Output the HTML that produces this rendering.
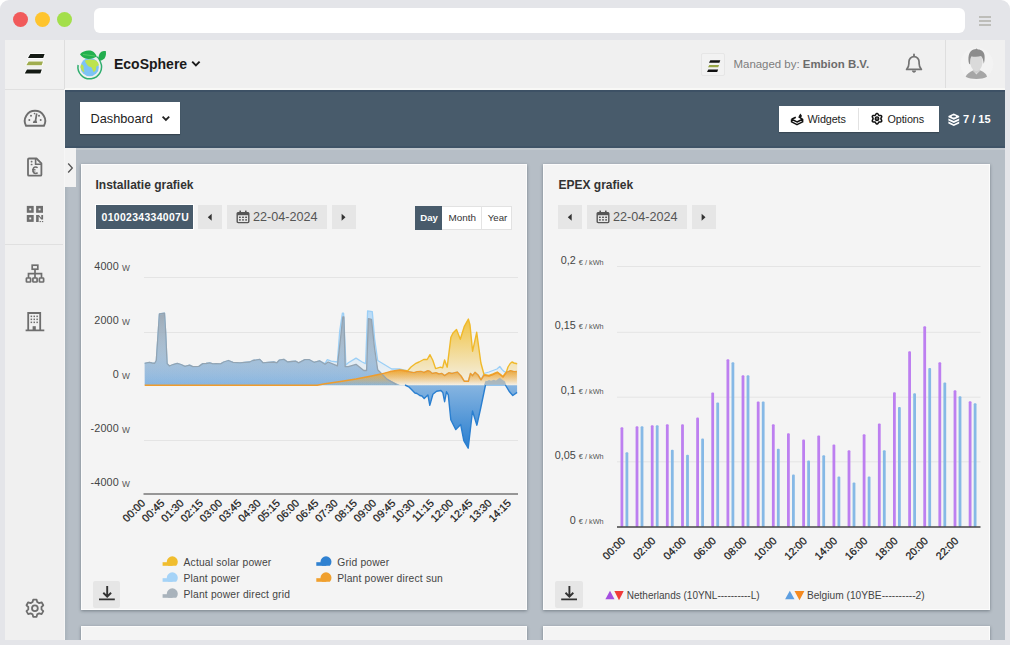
<!DOCTYPE html>
<html><head><meta charset="utf-8">
<style>
*{box-sizing:border-box;margin:0;padding:0}
html,body{width:1010px;height:645px;overflow:hidden;background:#fff;font-family:"Liberation Sans",sans-serif}
.a{position:absolute}
#frame{left:0;top:0;width:1010px;height:645px;background:#e4e5e9;border-radius:9px 9px 0 0}
.dot{width:15px;height:15px;border-radius:50%;top:12px}
#addr{left:94px;top:8px;width:871px;height:25px;background:#fff;border-radius:6px}
.hb{left:979px;width:12px;height:2px;background:#bdbdb9}
#side{left:5px;top:40px;width:60px;height:600px;background:#f0f0f0;border-right:1px solid #f6f6f6}
#hdr{left:65px;top:40px;width:940px;height:48px;background:#f0f0f0}
#hdrline{left:65px;top:88px;width:940px;height:2px;background:#f8f8f6}
#bar{left:65px;top:90px;width:940px;height:58px;background:#485b6b;border-top:2px solid #3d5165;border-bottom:2px solid #405467}
#content{left:65px;top:148px;width:940px;height:492px;background:#b6bec6}
.card{background:#f4f4f4;border:1px solid #fcfcfc;box-shadow:0 1px 3px rgba(40,50,60,.45)}
.txt{white-space:nowrap;line-height:1}
</style></head><body>
<div id="frame" class="a"></div>
<div class="a dot" style="left:13px;background:#f15a5b"></div>
<div class="a dot" style="left:35px;background:#fec42e"></div>
<div class="a dot" style="left:57px;background:#a3df4b"></div>
<div id="addr" class="a"></div>
<div class="a hb" style="top:16px"></div>
<div class="a hb" style="top:20px"></div>
<div class="a hb" style="top:24px"></div>

<div id="side" class="a"></div>
<div class="a" style="left:5px;top:89px;width:59px;height:1px;background:#e0e0e0"></div>
<div class="a" style="left:5px;top:244px;width:58px;height:1px;background:#e0e0e0"></div>
<div id="hdr" class="a"></div>
<div id="hdrline" class="a"></div>
<div id="bar" class="a"></div>
<div id="content" class="a"></div>
<div class="a" style="left:65px;top:148px;width:940px;height:2px;background:#c2c8ce"></div>
<div class="a" style="left:65px;top:148px;width:4px;height:492px;background:linear-gradient(90deg,#a9b3bb,#b6bec6)"></div>
<div class="a" style="left:64px;top:40px;width:1px;height:49px;background:#dedede"></div>
<div class="a" style="left:65px;top:148px;width:11px;height:39px;background:#f2f2f2"></div>


<!-- sidebar logo -->
<svg class="a" style="left:0;top:0" width="70" height="90" viewBox="0 0 70 90">
 <g stroke="#fff" stroke-width="1.6" stroke-linejoin="round" style="paint-order:stroke">
  <path d="M30.3 54 L44.6 54 L43.2 58 L28 58 Z" fill="#141a14"/>
  <path d="M28.6 61.5 L43 61.5 L41.7 65.3 L26.3 65.3 Z" fill="#a0ad50"/>
  <path d="M27 69.6 L41.8 69.6 L40.4 73.4 L24.7 73.4 Z" fill="#141a14"/>
 </g>
</svg>
<!-- globe logo -->
<svg class="a" style="left:74px;top:46px" width="36" height="36" viewBox="0 0 36 36">
 <circle cx="15.7" cy="21" r="9.2" fill="#7ec3f5"/>
 <path d="M11 14.5 C14 13.5 18 13 22 14.5 C24 16 25 18 24.8 19.5 C23 19.8 22 20.5 22 22 C22.5 24 21 25.5 19.5 26 C18.5 24 18.5 22 17 21 C15 21 13.5 20 13 18.5 C12 17 11 16 11 14.5 Z" fill="#bde34e"/>
 <path d="M7 18.5 C8.5 18 9.5 19.5 9.8 21 C9 22.5 10 24 10.5 26.5 C8.5 25.5 6.8 23 6.5 21 Z" fill="#bde34e"/>
 <path d="M4.1 19 A11.8 11.8 0 1 0 26.4 16" fill="none" stroke="#2fae6e" stroke-width="1.5"/>
 <path d="M26.4 16.2 C26 13.5 24.8 11.8 22.5 10.5" fill="none" stroke="#2fae6e" stroke-width="1.3"/>
 <path d="M6 8.3 C9 4.8 14 3.8 18 5 C20.5 6 22 8.5 22.8 10.5 C19.5 12.5 15 13.5 11.5 12.5 C9 11.8 7 10 6 8.3 Z" fill="#23b04f"/>
 <path d="M9 8.5 L21 10" stroke="#5fcf6a" stroke-width="0.8" fill="none"/>
 <path d="M25 14.5 C24 11.5 24.5 8 27 6 C28.5 5 30.5 4.8 31.8 5 C32.2 7.5 32 10.5 30.5 12.5 C29 14 27 14.8 25 14.5 Z" fill="#22ad4e"/>
</svg>
<div class="a txt" style="left:114px;top:57px;font-size:14px;font-weight:bold;color:#1a1a1a">EcoSphere</div>
<svg class="a" style="left:190px;top:59px" width="12" height="10" viewBox="0 0 12 10"><path d="M2.2 2.6 L5.9 6.4 L9.6 2.6" fill="none" stroke="#1a1a1a" stroke-width="1.9"/></svg>

<!-- managed by -->
<div class="a" style="left:701px;top:52.5px;width:24px;height:23px;background:#f2f2f2;border:1px solid #e6e6e6;border-radius:2px"></div>
<svg class="a" style="left:701px;top:52px" width="24" height="24" viewBox="0 0 24 24">
  <path d="M9.3 8.3 L19.3 8.3 L18.4 10.8 L8 10.8 Z" fill="#111"/>
  <path d="M8.3 13 L18.1 13 L17.2 15.3 L7 15.3 Z" fill="#97a545"/>
  <path d="M7.3 17.5 L17.1 17.5 L16.2 19.9 L6 19.9 Z" fill="#111"/>
</svg>
<div class="a txt" style="left:733.5px;top:59px;font-size:11.45px;color:#7d7d7d">Managed by: <b style="color:#6b6b6b">Embion B.V.</b></div>
<!-- bell -->
<svg class="a" style="left:902px;top:51px" width="24" height="24" viewBox="0 0 24 24">
 <path d="M12 3.4 L12 5.2" stroke="#737373" stroke-width="1.8" stroke-linecap="round"/>
 <path d="M4.6 18.4 C6.4 16.8 6.9 15 6.9 12.6 L6.9 10.9 C6.9 7.9 9.2 5.6 12 5.6 C14.8 5.6 17.1 7.9 17.1 10.9 L17.1 12.6 C17.1 15 17.6 16.8 19.4 18.4 Z" fill="none" stroke="#737373" stroke-width="1.7" stroke-linejoin="round"/>
 <path d="M9.9 19.6 L14.1 19.6 C14 20.9 13.1 21.7 12 21.7 C10.9 21.7 10 20.9 9.9 19.6 Z" fill="#737373"/>
</svg>
<div class="a" style="left:945px;top:40px;width:1px;height:48px;background:#dedede"></div>
<!-- avatar -->
<svg class="a" style="left:958px;top:46px" width="36" height="36" viewBox="0 0 36 36">
 <circle cx="18.8" cy="18.1" r="16.3" fill="#f3f3f3"/>
 <path d="M7.6 30.8 C8.8 27.8 11.5 26.4 15 24.6 L22.6 24.6 C26 26.4 28.6 27.8 29 30.8 C26.5 32.3 22.5 33 18.3 33 C14.2 33 10.2 32.3 7.6 30.8 Z" fill="#a6a6a6"/>
 <path d="M15.3 24.8 L18.4 28.6 L21.7 24.8 Z" fill="#e6e6e6"/>
 <path d="M15.2 20.5 L15.2 25.2 L18.4 27.6 L21.7 25.2 L21.7 20.5 Z" fill="#cfcfcf"/>
 <path d="M12.3 15.5 C12.3 10.5 14.5 8 18.4 8 C22.3 8 24.5 10.5 24.5 15.5 C24.5 21 21.8 25 18.4 25 C15 25 12.3 21 12.3 15.5 Z" fill="#dadada"/>
 <path d="M11 17.5 C9.8 12 10.5 6.8 14 4.3 C15.2 3.5 16.3 3.2 17.3 3.3 L18.6 2.4 L19.9 3.5 C23.5 3.5 26.6 6 26.6 10.2 C26.7 13 26.5 15.5 25.8 17.8 C25.3 14.5 24.8 11.5 23 10 C20 11 15.5 10.6 13.3 10.4 C12.4 12.5 12 14.5 12.2 18.5 Z" fill="#8c8c8c"/>
</svg>


<!-- toolbar -->
<div class="a" style="left:80px;top:102px;width:100px;height:32px;background:#fff;box-shadow:0 1px 1px rgba(0,0,0,.25)"></div>
<div class="a txt" style="left:90.5px;top:112.6px;font-size:12.75px;color:#222">Dashboard</div>
<svg class="a" style="left:160px;top:113px" width="12" height="10" viewBox="0 0 12 10"><path d="M2.6 3.6 L5.9 6.9 L9.2 3.6" fill="none" stroke="#222" stroke-width="1.8"/></svg>

<div class="a" style="left:779px;top:106px;width:160px;height:26px;background:#fff;box-shadow:0 1px 1px rgba(0,0,0,.2)"></div>
<div class="a" style="left:857.5px;top:108px;width:1px;height:22px;background:#e2e2e2"></div>
<svg class="a" style="left:790px;top:111px" width="16" height="16" viewBox="0 0 16 16">
 <path d="M1.6 8.3 L5.8 6.2 M8.6 5.6 L12.6 8.3 L7 10.9 L1.6 8.3 M1.6 8.3 L1.6 10.9 L7 13.6 L12.6 10.9 L12.6 8.3" fill="none" stroke="#111" stroke-width="1.6" stroke-linejoin="round"/>
 <path d="M10.4 2.6 L12 4.9 L10.4 7.2 L8.8 4.9 Z" fill="#111"/>
</svg>
<div class="a txt" style="left:807.5px;top:114px;font-size:10.8px;color:#1c1c1c;letter-spacing:-0.1px">Widgets</div>
<svg class="a" style="left:870px;top:112px" width="14" height="14" viewBox="0 0 14 14">
 <path d="M7.00 1.35 L7.67 1.61 L8.19 2.26 L8.56 2.94 L8.92 3.37 L9.48 3.47 L10.25 3.45 L11.07 3.58 L11.63 4.03 L11.74 4.74 L11.44 5.51 L11.03 6.17 L10.85 6.70 L11.03 7.23 L11.44 7.89 L11.74 8.66 L11.63 9.38 L11.07 9.82 L10.25 9.95 L9.48 9.93 L8.92 10.03 L8.56 10.46 L8.19 11.14 L7.67 11.79 L7.00 12.05 L6.33 11.79 L5.81 11.14 L5.44 10.46 L5.08 10.03 L4.52 9.93 L3.75 9.95 L2.93 9.82 L2.37 9.38 L2.26 8.66 L2.56 7.89 L2.97 7.23 L3.15 6.70 L2.97 6.17 L2.56 5.51 L2.26 4.74 L2.37 4.03 L2.93 3.58 L3.75 3.45 L4.52 3.47 L5.07 3.37 L5.44 2.94 L5.81 2.26 L6.33 1.61 Z" fill="none" stroke="#111" stroke-width="1.5" stroke-linejoin="round"/>
 <circle cx="7" cy="6.7" r="1.8" fill="#666" stroke="#111" stroke-width="1.3"/>
</svg>
<div class="a txt" style="left:887.5px;top:114px;font-size:10.8px;color:#1c1c1c;letter-spacing:-0.1px">Options</div>
<svg class="a" style="left:946px;top:112px" width="15" height="15" viewBox="0 0 15 15">
 <path d="M7.8 1.4 L13.2 4 L13.2 5.2 L7.8 7.8 L2.4 5.2 L2.4 4 Z" fill="#fff"/>
 <path d="M2.4 6.4 L7.8 9 L13.2 6.4 L13.2 8.4 L7.8 11 L2.4 8.4 Z" fill="#fff"/>
 <path d="M2.4 9.6 L7.8 12.2 L13.2 9.6 L13.2 11.4 L7.8 14 L2.4 11.4 Z" fill="#fff"/>
 <ellipse cx="7.8" cy="4.4" rx="2.2" ry="1" fill="#485b6b"/>
</svg>
<div class="a txt" style="left:963px;top:114px;font-size:11px;font-weight:bold;color:#fff">7 / 15</div>
<!-- toggle chevron -->
<svg class="a" style="left:65px;top:160px" width="11" height="16" viewBox="0 0 11 16"><path d="M3.2 3.5 L7.3 8 L3.2 12.5" fill="none" stroke="#555" stroke-width="1.3"/></svg>

<!-- sidebar icons -->
<svg class="a" style="left:20px;top:104px" width="30" height="26" viewBox="0 0 30 26">
 <path d="M6 21.8 A10.2 10.2 0 1 1 24 21.8 Z" fill="none" stroke="#6e6e6e" stroke-width="1.9" stroke-linejoin="round"/>
 <circle cx="9.3" cy="16" r="1" fill="#6e6e6e"/><circle cx="11" cy="11.8" r="1" fill="#6e6e6e"/>
 <circle cx="20.7" cy="16" r="1" fill="#6e6e6e"/><circle cx="19" cy="11.8" r="1" fill="#6e6e6e"/>
 <circle cx="14.5" cy="9.6" r="0.8" fill="#6e6e6e"/>
 <path d="M16.7 9.5 L15.4 17.5" stroke="#6e6e6e" stroke-width="1.7"/>
 <path d="M12.8 19 L17.2 19 L16.6 16.8 L13.6 16.8 Z" fill="#6e6e6e"/>
</svg>
<svg class="a" style="left:20px;top:152px" width="30" height="30" viewBox="0 0 30 30">
 <path d="M9 6.5 L16.5 6.5 L21.4 11.4 L21.4 22.7 C21.4 23.3 21 23.7 20.4 23.7 L9 23.7 C8.4 23.7 8 23.3 8 22.7 L8 7.5 C8 6.9 8.4 6.5 9 6.5 Z" fill="none" stroke="#6e6e6e" stroke-width="1.8" stroke-linejoin="round"/>
 <path d="M15.6 6.8 L15.6 12.2 L21.2 12.2" fill="none" stroke="#6e6e6e" stroke-width="1.6"/>
 <rect x="10.7" y="8.8" width="1.8" height="1.6" rx="0.6" fill="#6e6e6e"/><rect x="10.7" y="11.7" width="1.8" height="1.6" rx="0.6" fill="#6e6e6e"/>
 <path d="M17.6 15.8 C17.1 15.3 16.4 15 15.7 15 C14.2 15 13 16.4 13 18.2 C13 20 14.2 21.4 15.7 21.4 C16.4 21.4 17.1 21.1 17.6 20.6" fill="none" stroke="#6e6e6e" stroke-width="1.5"/>
 <path d="M12 17.5 L15.5 17.5 M12 19 L15.5 19" stroke="#6e6e6e" stroke-width="0.9"/>
</svg>
<svg class="a" style="left:20px;top:200px" width="30" height="30" viewBox="0 0 30 30">
 <g fill="none" stroke="#6e6e6e" stroke-width="2.5">
  <rect x="8.05" y="7.15" width="4.4" height="4.4"/><rect x="17.35" y="7.15" width="4.4" height="4.4"/><rect x="8.05" y="16.25" width="4.4" height="4.4"/>
 </g>
 <path d="M16.1 15 L18.9 15 L21.3 18 L21.3 15 L23.1 15 L23.1 19.6 L21.3 19.6 L18.7 16.6 L18.7 22 L16.1 22 Z" fill="#6e6e6e"/>
 <rect x="19.6" y="21" width="1.3" height="1.1" fill="#6e6e6e"/><rect x="21.9" y="21" width="1.3" height="1.1" fill="#6e6e6e"/>
</svg>
<svg class="a" style="left:20px;top:259px" width="30" height="30" viewBox="0 0 30 30">
 <g fill="none" stroke="#6e6e6e" stroke-width="1.7">
  <rect x="12.2" y="6.2" width="5.6" height="4"/>
  <rect x="6.4" y="19" width="4.2" height="4" rx="0.6"/><rect x="12.9" y="19" width="4.2" height="4" rx="0.6"/><rect x="19.4" y="19" width="4.2" height="4" rx="0.6"/>
  <path d="M15 10.2 L15 19 M8.5 19 L8.5 14.6 L21.5 14.6 L21.5 19"/>
 </g>
</svg>
<svg class="a" style="left:20px;top:307px" width="30" height="30" viewBox="0 0 30 30">
 <path d="M8.2 23.2 L8.2 6 L20.2 6 L20.2 23.2 M5.6 23.4 L24.3 23.4" fill="none" stroke="#6e6e6e" stroke-width="1.8"/>
 <g fill="#6e6e6e">
  <rect x="10.6" y="8.6" width="1.5" height="1.5"/><rect x="13.5" y="8.6" width="1.5" height="1.5"/><rect x="16.4" y="8.6" width="1.5" height="1.5"/>
  <rect x="10.6" y="11.6" width="1.5" height="1.5"/><rect x="13.5" y="11.6" width="1.5" height="1.5"/><rect x="16.4" y="11.6" width="1.5" height="1.5"/>
  <rect x="10.6" y="14.6" width="1.5" height="1.5"/><rect x="13.5" y="14.6" width="1.5" height="1.5"/><rect x="16.4" y="14.6" width="1.5" height="1.5"/>
  <rect x="12.6" y="19.2" width="3.2" height="4"/>
 </g>
</svg>
<svg class="a" style="left:20px;top:593px" width="30" height="30" viewBox="0 0 30 30">
 <path d="M13.2 6.6 L16.6 6.6 L17.2 9 L19.2 10.1 L21.6 9.3 L23.3 12.3 L21.5 14 L21.5 16.4 L23.3 18.1 L21.6 21.1 L19.2 20.3 L17.2 21.4 L16.6 23.8 L13.2 23.8 L12.6 21.4 L10.6 20.3 L8.2 21.1 L6.5 18.1 L8.3 16.4 L8.3 14 L6.5 12.3 L8.2 9.3 L10.6 10.1 L12.6 9 Z" fill="none" stroke="#6e6e6e" stroke-width="1.8" stroke-linejoin="round"/>
 <circle cx="14.9" cy="15.2" r="2.9" fill="none" stroke="#6e6e6e" stroke-width="1.8"/>
</svg>

<!-- cards -->
<div class="a card" style="left:81px;top:164px;width:446px;height:446px"></div>
<div class="a card" style="left:543px;top:164px;width:447px;height:446px"></div>
<div class="a card" style="left:81px;top:626px;width:446px;height:20px"></div>
<div class="a card" style="left:543px;top:626px;width:447px;height:20px"></div>
<div class="a" style="left:65px;top:640px;width:945px;height:5px;background:#e4e5e9"></div>
<div class="a" style="left:1005px;top:40px;width:5px;height:605px;background:#e4e5e9"></div>


<!-- left card header -->
<div class="a txt" style="left:95.5px;top:178.5px;font-size:12px;font-weight:bold;color:#333">Installatie grafiek</div>
<div class="a" style="left:96px;top:205px;width:97px;height:24px;background:#485b6b;box-shadow:0 0 0 1px #fff"></div>
<div class="a txt" style="left:101.5px;top:213.3px;font-size:10.4px;font-weight:bold;color:#fff;letter-spacing:0.35px">0100234334007U</div>
<div class="a" style="left:198px;top:205px;width:24px;height:24px;background:#e6e6e6"></div>
<svg class="a" style="left:198px;top:205px" width="24" height="24" viewBox="0 0 24 24"><path d="M13.7 8.8 L13.7 15.8 L9.8 12.3 Z" fill="#333"/></svg>
<div class="a" style="left:227px;top:205px;width:100px;height:24px;background:#e6e6e6"></div>
<svg class="a" style="left:236px;top:209px" width="14" height="16" viewBox="0 0 14 16">
 <path d="M2.2 3.6 L11.8 3.6 C12.4 3.6 12.8 4 12.8 4.6 L12.8 12.6 C12.8 13.2 12.4 13.6 11.8 13.6 L2.2 13.6 C1.6 13.6 1.2 13.2 1.2 12.6 L1.2 4.6 C1.2 4 1.6 3.6 2.2 3.6 Z" fill="none" stroke="#555" stroke-width="1.4"/>
 <rect x="1.2" y="3.6" width="11.6" height="2.6" fill="#555"/>
 <rect x="3.4" y="1.6" width="1.6" height="3" fill="#555"/><rect x="9" y="1.6" width="1.6" height="3" fill="#555"/>
 <g fill="#555"><rect x="3" y="7.6" width="1.8" height="1.4"/><rect x="6.1" y="7.6" width="1.8" height="1.4"/><rect x="9.2" y="7.6" width="1.8" height="1.4"/>
 <rect x="3" y="10.2" width="1.8" height="1.4"/><rect x="6.1" y="10.2" width="1.8" height="1.4"/><rect x="9.2" y="10.2" width="1.8" height="1.4"/></g>
</svg>
<div class="a txt" style="left:253px;top:210.5px;font-size:12.6px;color:#555">22-04-2024</div>
<div class="a" style="left:332px;top:205px;width:24px;height:24px;background:#e6e6e6"></div>
<svg class="a" style="left:332px;top:205px" width="24" height="24" viewBox="0 0 24 24"><path d="M9.6 8.8 L9.6 15.8 L13.5 12.3 Z" fill="#333"/></svg>
<!-- day month year -->
<div class="a" style="left:415px;top:205.5px;width:97px;height:24px;background:#fff;border:1px solid #e2e2e2"></div>
<div class="a" style="left:415px;top:205.5px;width:27px;height:24px;background:#485b6b"></div>
<div class="a" style="left:481px;top:206px;width:1px;height:23px;background:#e4e4e4"></div>
<div class="a txt" style="left:420.3px;top:212.8px;font-size:9.6px;font-weight:bold;color:#fff">Day</div>
<div class="a txt" style="left:448.5px;top:213.2px;font-size:9.9px;color:#333">Month</div>
<div class="a txt" style="left:487.8px;top:213.2px;font-size:9.6px;color:#333">Year</div>

<!-- right card header -->
<div class="a txt" style="left:558.5px;top:178.5px;font-size:12px;font-weight:bold;color:#333">EPEX grafiek</div>
<div class="a" style="left:558px;top:205px;width:24px;height:24px;background:#e6e6e6"></div>
<svg class="a" style="left:558px;top:205px" width="24" height="24" viewBox="0 0 24 24"><path d="M13.7 8.8 L13.7 15.8 L9.8 12.3 Z" fill="#333"/></svg>
<div class="a" style="left:587px;top:205px;width:100px;height:24px;background:#e6e6e6"></div>
<svg class="a" style="left:596px;top:209px" width="14" height="16" viewBox="0 0 14 16">
 <path d="M2.2 3.6 L11.8 3.6 C12.4 3.6 12.8 4 12.8 4.6 L12.8 12.6 C12.8 13.2 12.4 13.6 11.8 13.6 L2.2 13.6 C1.6 13.6 1.2 13.2 1.2 12.6 L1.2 4.6 C1.2 4 1.6 3.6 2.2 3.6 Z" fill="none" stroke="#555" stroke-width="1.4"/>
 <rect x="1.2" y="3.6" width="11.6" height="2.6" fill="#555"/>
 <rect x="3.4" y="1.6" width="1.6" height="3" fill="#555"/><rect x="9" y="1.6" width="1.6" height="3" fill="#555"/>
 <g fill="#555"><rect x="3" y="7.6" width="1.8" height="1.4"/><rect x="6.1" y="7.6" width="1.8" height="1.4"/><rect x="9.2" y="7.6" width="1.8" height="1.4"/>
 <rect x="3" y="10.2" width="1.8" height="1.4"/><rect x="6.1" y="10.2" width="1.8" height="1.4"/><rect x="9.2" y="10.2" width="1.8" height="1.4"/></g>
</svg>
<div class="a txt" style="left:613px;top:210.5px;font-size:12.6px;color:#555">22-04-2024</div>
<div class="a" style="left:692px;top:205px;width:24px;height:24px;background:#e6e6e6"></div>
<svg class="a" style="left:692px;top:205px" width="24" height="24" viewBox="0 0 24 24"><path d="M9.6 8.8 L9.6 15.8 L13.5 12.3 Z" fill="#333"/></svg>

<!-- download buttons -->
<div class="a" style="left:93px;top:581px;width:27px;height:27px;background:#e6e6e6;border-radius:2px"></div>
<svg class="a" style="left:93px;top:581px" width="27" height="27" viewBox="0 0 27 27">
 <path d="M14.2 5 L14.2 15.5 M10.3 11.8 L14.2 15.6 L18.1 11.8 M6 18.4 L21.8 18.4" fill="none" stroke="#333" stroke-width="1.9"/>
</svg>
<div class="a" style="left:555px;top:581px;width:28px;height:27px;background:#e6e6e6;border-radius:2px"></div>
<svg class="a" style="left:555px;top:581px" width="27" height="27" viewBox="0 0 27 27">
 <path d="M14.4 5 L14.4 15.5 M10.5 11.8 L14.4 15.6 L18.3 11.8 M6.2 18.4 L22 18.4" fill="none" stroke="#333" stroke-width="1.9"/>
</svg>

<!--CHART1-->
<svg class="a" style="left:0;top:0" width="1010" height="645" viewBox="0 0 1010 645">
<defs>
<linearGradient id="gY" gradientUnits="userSpaceOnUse" x1="0" y1="319" x2="0" y2="385"><stop offset="0" stop-color="#f1c13a" stop-opacity="0.95"/><stop offset="1" stop-color="#f1c13a" stop-opacity="0.05"/></linearGradient>
<linearGradient id="gO" gradientUnits="userSpaceOnUse" x1="0" y1="370" x2="0" y2="385"><stop offset="0" stop-color="#ee9b2a" stop-opacity="0.95"/><stop offset="1" stop-color="#ee9b2a" stop-opacity="0.02"/></linearGradient>
<linearGradient id="gG" gradientUnits="userSpaceOnUse" x1="0" y1="311" x2="0" y2="385"><stop offset="0" stop-color="#9ca6b0" stop-opacity="0.95"/><stop offset="1" stop-color="#a0a8b0" stop-opacity="0"/></linearGradient>
<linearGradient id="gB" gradientUnits="userSpaceOnUse" x1="0" y1="311" x2="0" y2="385"><stop offset="0" stop-color="#9fd0f8" stop-opacity="0.7"/><stop offset="1" stop-color="#9fd0f8" stop-opacity="0"/></linearGradient>
<linearGradient id="gN" gradientUnits="userSpaceOnUse" x1="0" y1="311" x2="0" y2="448"><stop offset="0" stop-color="#2a7fd0" stop-opacity="0"/><stop offset="1" stop-color="#2a7fd0" stop-opacity="1"/></linearGradient>
</defs>
<path d="M144 277.5 L518 277.5" stroke="#e4e4e4" stroke-width="1"/>
<path d="M144 332.5 L518 332.5" stroke="#e4e4e4" stroke-width="1"/>
<path d="M144 440.5 L518 440.5" stroke="#e4e4e4" stroke-width="1"/>
<path d="M143.5 494 L518 494" stroke="#777" stroke-width="1.6"/>
<path d="M144.7,385.3 L144.7,363.3 149.3,362.3 152.0,363.0 154.7,363.3 156.3,360.5 159.4,314.0 164.5,313.2 165.6,331.0 167.1,363.6 169.5,366.0 173.0,364.5 177.2,363.3 181.0,364.5 185.0,366.4 189.6,365.1 192.7,366.7 198.9,366.4 202.8,363.6 206.0,363.5 209.8,362.8 213.0,363.8 216.0,363.6 220.6,363.9 223.7,362.0 228.4,360.5 233.0,362.3 240.0,362.8 244.3,362.3 249.7,362.0 252.8,360.5 259.8,359.4 262.9,362.8 268.0,362.3 273.8,362.0 276.9,362.8 279.2,360.2 283.8,359.4 287.7,362.0 292.0,361.5 295.5,361.2 298.6,362.8 304.8,359.7 309.4,359.7 314.0,362.3 319.5,360.8 325.0,364.3 328.1,362.0 337.4,365.9 340.5,338.8 342.8,317.0 343.9,317.0 345.2,366.7 348.3,366.7 356.0,364.3 363.8,370.5 366.6,370.5 368.4,318.6 371.5,319.4 374.3,346.5 377.7,369.8 387.0,379.1 400.0,385.0 405.0,385.0 408.7,386.8 411.0,389.0 414.9,393.0 417.0,393.5 419.8,395.5 422.0,396.0 424.2,398.6 427.9,394.9 429.8,405.4 432.9,394.3 436.6,391.2 440.9,390.5 442.8,392.4 444.6,401.7 446.5,391.8 448.3,394.9 450.8,419.7 455.8,429.6 460.7,424.6 463.8,440.7 468.2,448.2 472.5,411.0 476.9,425.2 480.6,408.5 485.5,385.0 505.4,385.0 509.1,391.2 512.8,395.5 517.1,392.4 L517.1,385.3 Z" fill="url(#gN)"/>
<path d="M144.7,385.3 L144.7,363.3 149.3,362.3 152.0,363.0 154.7,363.3 156.3,360.5 159.4,314.0 164.5,313.2 165.6,331.0 167.1,363.6 169.5,366.0 173.0,364.5 177.2,363.3 181.0,364.5 185.0,366.4 189.6,365.1 192.7,366.7 198.9,366.4 202.8,363.6 206.0,363.5 209.8,362.8 213.0,363.8 216.0,363.6 220.6,363.9 223.7,362.0 228.4,360.5 233.0,362.3 240.0,362.8 244.3,362.3 249.7,362.0 252.8,360.5 259.8,359.4 262.9,362.8 268.0,362.3 273.8,362.0 276.9,362.8 279.2,360.2 283.8,359.4 287.7,362.0 292.0,361.5 295.5,361.2 298.6,362.8 304.8,359.7 309.4,359.7 314.0,362.3 319.5,360.8 325.0,363.6 327.3,359.7 331.2,361.2 337.4,362.0 339.7,331.0 342.4,313.2 343.6,313.2 344.8,338.8 345.9,365.1 348.3,362.8 356.0,358.1 362.2,362.0 365.6,363.6 367.6,310.9 372.3,311.6 374.6,338.8 377.7,360.5 383.9,364.3 391.7,369.0 399.4,369.0 405.6,370.5 407.0,371.4 410.0,372.0 414.0,372.8 417.0,371.8 420.9,371.4 424.0,372.5 427.9,370.7 430.0,371.5 432.1,373.5 436.0,372.8 439.0,374.0 441.9,373.5 444.6,375.6 448.8,372.8 452.0,373.5 457.2,372.1 461.0,376.0 464.2,381.2 468.4,381.2 470.5,373.5 472.6,375.6 475.0,372.4 478.0,375.0 481.0,379.8 484.0,373.5 489.0,372.0 493.0,370.5 497.0,369.0 499.8,366.5 502.0,369.5 504.3,371.7 506.4,372.4 510.6,370.7 514.0,371.8 516.9,371.4 L516.9,385.3 Z" fill="url(#gB)"/>
<path d="M144.7,385.3 L144.7,363.3 149.3,362.3 152.0,363.0 154.7,363.3 156.3,360.5 159.4,314.0 164.5,313.2 165.6,331.0 167.1,363.6 169.5,366.0 173.0,364.5 177.2,363.3 181.0,364.5 185.0,366.4 189.6,365.1 192.7,366.7 198.9,366.4 202.8,363.6 206.0,363.5 209.8,362.8 213.0,363.8 216.0,363.6 220.6,363.9 223.7,362.0 228.4,360.5 233.0,362.3 240.0,362.8 244.3,362.3 249.7,362.0 252.8,360.5 259.8,359.4 262.9,362.8 268.0,362.3 273.8,362.0 276.9,362.8 279.2,360.2 283.8,359.4 287.7,362.0 292.0,361.5 295.5,361.2 298.6,362.8 304.8,359.7 309.4,359.7 314.0,362.3 319.5,360.8 325.0,364.3 328.1,362.0 337.4,365.9 340.5,338.8 342.8,317.0 343.9,317.0 345.2,366.7 348.3,366.7 356.0,364.3 363.8,370.5 366.6,370.5 368.4,318.6 371.5,319.4 374.3,346.5 377.7,369.8 387.0,379.1 396.3,384.5 405.6,385.3 L405.6,385.3 Z" fill="url(#gG)"/>
<path d="M144.7,385.3 L144.7,385.3 317.2,385.3 325.0,383.7 340.5,381.4 356.0,379.1 371.5,376.0 380.8,374.1 390.1,371.6 399.4,370.1 403.0,370.5 407.0,371.4 410.0,372.0 414.0,372.8 417.0,371.8 420.9,371.4 424.0,372.5 427.9,370.7 430.0,371.5 432.1,373.5 436.0,372.8 439.0,374.0 441.9,373.5 444.6,375.6 448.8,372.8 452.0,373.5 457.2,372.1 461.0,376.0 464.2,381.2 468.4,381.2 470.5,373.5 472.6,375.6 475.0,372.4 478.0,375.0 481.0,379.8 484.0,375.2 489.0,376.0 493.0,374.5 497.3,372.4 500.0,374.5 503.0,377.0 506.4,372.4 510.6,370.7 514.0,371.8 516.9,371.4 L516.9,385.3 Z" fill="url(#gO)"/>
<path d="M144.7,385.3 L144.7,385.3 317.2,385.3 325.0,383.7 340.5,381.4 356.0,379.1 371.5,376.0 380.8,374.1 390.1,371.6 399.4,370.1 407.7,370.7 411.0,367.0 415.3,363.7 419.0,362.0 423.7,359.5 427.2,359.5 430.0,354.7 432.8,360.2 435.6,368.6 440.5,367.2 442.6,367.9 444.6,360.0 447.2,367.2 450.9,337.2 453.0,333.0 456.5,329.5 460.3,339.3 464.2,326.7 468.4,319.1 470.0,325.0 472.6,351.2 476.7,332.3 480.9,363.0 484.0,374.5 489.0,375.5 493.0,374.0 497.3,372.1 500.0,374.0 503.0,376.5 506.4,372.0 508.0,367.0 510.2,363.5 512.0,362.0 514.0,363.0 517.2,363.7 L517.2,385.3 Z" fill="url(#gY)"/>
<path d="M484.0,385.3 485.5,380.8 487.0,381.0 489.0,380.1 491.0,380.8 493.8,379.8 496.0,380.5 498.0,379.0 499.8,377.7 502.0,379.5 505.0,381.5 506.2,385.3 Z" fill="#9fb0bd" fill-opacity="0.85"/>
<path d="M485.5,385.3 L505.4,385.3" stroke="#8ec3f0" stroke-width="1.2"/>
<path d="M405.0,385.0 408.7,386.8 411.0,389.0 414.9,393.0 417.0,393.5 419.8,395.5 422.0,396.0 424.2,398.6 427.9,394.9 429.8,405.4 432.9,394.3 436.6,391.2 440.9,390.5 442.8,392.4 444.6,401.7 446.5,391.8 448.3,394.9 450.8,419.7 455.8,429.6 460.7,424.6 463.8,440.7 468.2,448.2 472.5,411.0 476.9,425.2 480.6,408.5 485.5,385.0" fill="none" stroke="#2a7fd0" stroke-width="1.4" stroke-linejoin="round"/>
<path d="M505.4,385.0 509.1,391.2 512.8,395.5 517.1,392.4" fill="none" stroke="#2a7fd0" stroke-width="1.4" stroke-linejoin="round"/>
<path d="M144.7,363.3 149.3,362.3 152.0,363.0 154.7,363.3 156.3,360.5 159.4,314.0 164.5,313.2 165.6,331.0 167.1,363.6 169.5,366.0 173.0,364.5 177.2,363.3 181.0,364.5 185.0,366.4 189.6,365.1 192.7,366.7 198.9,366.4 202.8,363.6 206.0,363.5 209.8,362.8 213.0,363.8 216.0,363.6 220.6,363.9 223.7,362.0 228.4,360.5 233.0,362.3 240.0,362.8 244.3,362.3 249.7,362.0 252.8,360.5 259.8,359.4 262.9,362.8 268.0,362.3 273.8,362.0 276.9,362.8 279.2,360.2 283.8,359.4 287.7,362.0 292.0,361.5 295.5,361.2 298.6,362.8 304.8,359.7 309.4,359.7 314.0,362.3 319.5,360.8 325.0,363.6 327.3,359.7 331.2,361.2 337.4,362.0 339.7,331.0 342.4,313.2 343.6,313.2 344.8,338.8 345.9,365.1 348.3,362.8 356.0,358.1 362.2,362.0 365.6,363.6 367.6,310.9 372.3,311.6 374.6,338.8 377.7,360.5 383.9,364.3 391.7,369.0 399.4,369.0 405.6,370.5 407.0,371.4 410.0,372.0 414.0,372.8 417.0,371.8 420.9,371.4 424.0,372.5 427.9,370.7 430.0,371.5 432.1,373.5 436.0,372.8 439.0,374.0 441.9,373.5 444.6,375.6 448.8,372.8 452.0,373.5 457.2,372.1 461.0,376.0 464.2,381.2 468.4,381.2 470.5,373.5 472.6,375.6 475.0,372.4 478.0,375.0 481.0,379.8 484.0,373.5 489.0,372.0 493.0,370.5 497.0,369.0 499.8,366.5 502.0,369.5 504.3,371.7 506.4,372.4 510.6,370.7 514.0,371.8 516.9,371.4" fill="none" stroke="#9ccff6" stroke-width="1.3" stroke-linejoin="round"/>
<path d="M144.7,363.3 149.3,362.3 152.0,363.0 154.7,363.3 156.3,360.5 159.4,314.0 164.5,313.2 165.6,331.0 167.1,363.6 169.5,366.0 173.0,364.5 177.2,363.3 181.0,364.5 185.0,366.4 189.6,365.1 192.7,366.7 198.9,366.4 202.8,363.6 206.0,363.5 209.8,362.8 213.0,363.8 216.0,363.6 220.6,363.9 223.7,362.0 228.4,360.5 233.0,362.3 240.0,362.8 244.3,362.3 249.7,362.0 252.8,360.5 259.8,359.4 262.9,362.8 268.0,362.3 273.8,362.0 276.9,362.8 279.2,360.2 283.8,359.4 287.7,362.0 292.0,361.5 295.5,361.2 298.6,362.8 304.8,359.7 309.4,359.7 314.0,362.3 319.5,360.8 325.0,364.3 328.1,362.0 337.4,365.9 340.5,338.8 342.8,317.0 343.9,317.0 345.2,366.7 348.3,366.7 356.0,364.3 363.8,370.5 366.6,370.5 368.4,318.6 371.5,319.4 374.3,346.5 377.7,369.8 387.0,379.1 396.3,384.5" fill="none" stroke="#93a3b1" stroke-width="1.3" stroke-linejoin="round"/>
<path d="M399.4,370.1 407.7,370.7 411.0,367.0 415.3,363.7 419.0,362.0 423.7,359.5 427.2,359.5 430.0,354.7 432.8,360.2 435.6,368.6 440.5,367.2 442.6,367.9 444.6,360.0 447.2,367.2 450.9,337.2 453.0,333.0 456.5,329.5 460.3,339.3 464.2,326.7 468.4,319.1 470.0,325.0 472.6,351.2 476.7,332.3 480.9,363.0 484.0,374.5 489.0,375.5 493.0,374.0 497.3,372.1 500.0,374.0 503.0,376.5 506.4,372.0 508.0,367.0 510.2,363.5 512.0,362.0 514.0,363.0 517.2,363.7" fill="none" stroke="#f0b92a" stroke-width="1.4" stroke-linejoin="round"/>
<path d="M144.7,385.3 317.2,385.3 325.0,383.7 340.5,381.4 356.0,379.1 371.5,376.0 380.8,374.1 390.1,371.6 399.4,370.1 403.0,370.5 407.0,371.4 410.0,372.0 414.0,372.8 417.0,371.8 420.9,371.4 424.0,372.5 427.9,370.7 430.0,371.5 432.1,373.5 436.0,372.8 439.0,374.0 441.9,373.5 444.6,375.6 448.8,372.8 452.0,373.5 457.2,372.1 461.0,376.0 464.2,381.2 468.4,381.2 470.5,373.5 472.6,375.6 475.0,372.4 478.0,375.0 481.0,379.8 484.0,375.2 489.0,376.0 493.0,374.5 497.3,372.4 500.0,374.5 503.0,377.0 506.4,372.4 510.6,370.7 514.0,371.8 516.9,371.4" fill="none" stroke="#ef9c2c" stroke-width="1.5" stroke-linejoin="round"/>
<text x="119" y="270.3" text-anchor="end" font-family="Liberation Sans" font-size="10.8" fill="#444" letter-spacing="0.2">4000</text>
<text x="130" y="270.8" text-anchor="end" font-family="Liberation Sans" font-size="8.4" fill="#555">W</text>
<text x="119" y="324.3" text-anchor="end" font-family="Liberation Sans" font-size="10.8" fill="#444" letter-spacing="0.2">2000</text>
<text x="130" y="324.8" text-anchor="end" font-family="Liberation Sans" font-size="8.4" fill="#555">W</text>
<text x="119" y="378.3" text-anchor="end" font-family="Liberation Sans" font-size="10.8" fill="#444" letter-spacing="0.2">0</text>
<text x="130" y="378.8" text-anchor="end" font-family="Liberation Sans" font-size="8.4" fill="#555">W</text>
<text x="119" y="432.3" text-anchor="end" font-family="Liberation Sans" font-size="10.8" fill="#444" letter-spacing="0.2">-2000</text>
<text x="130" y="432.8" text-anchor="end" font-family="Liberation Sans" font-size="8.4" fill="#555">W</text>
<text x="119" y="486.3" text-anchor="end" font-family="Liberation Sans" font-size="10.8" fill="#444" letter-spacing="0.2">-4000</text>
<text x="130" y="486.8" text-anchor="end" font-family="Liberation Sans" font-size="8.4" fill="#555">W</text>
<text transform="translate(146.0,503.8) rotate(-45)" text-anchor="end" font-family="Liberation Sans" font-size="10.7" fill="#222" stroke="#222" stroke-width="0.25">00:00</text>
<text transform="translate(165.2,503.8) rotate(-45)" text-anchor="end" font-family="Liberation Sans" font-size="10.7" fill="#222" stroke="#222" stroke-width="0.25">00:45</text>
<text transform="translate(184.5,503.8) rotate(-45)" text-anchor="end" font-family="Liberation Sans" font-size="10.7" fill="#222" stroke="#222" stroke-width="0.25">01:30</text>
<text transform="translate(203.8,503.8) rotate(-45)" text-anchor="end" font-family="Liberation Sans" font-size="10.7" fill="#222" stroke="#222" stroke-width="0.25">02:15</text>
<text transform="translate(223.0,503.8) rotate(-45)" text-anchor="end" font-family="Liberation Sans" font-size="10.7" fill="#222" stroke="#222" stroke-width="0.25">03:00</text>
<text transform="translate(242.2,503.8) rotate(-45)" text-anchor="end" font-family="Liberation Sans" font-size="10.7" fill="#222" stroke="#222" stroke-width="0.25">03:45</text>
<text transform="translate(261.5,503.8) rotate(-45)" text-anchor="end" font-family="Liberation Sans" font-size="10.7" fill="#222" stroke="#222" stroke-width="0.25">04:30</text>
<text transform="translate(280.8,503.8) rotate(-45)" text-anchor="end" font-family="Liberation Sans" font-size="10.7" fill="#222" stroke="#222" stroke-width="0.25">05:15</text>
<text transform="translate(300.0,503.8) rotate(-45)" text-anchor="end" font-family="Liberation Sans" font-size="10.7" fill="#222" stroke="#222" stroke-width="0.25">06:00</text>
<text transform="translate(319.2,503.8) rotate(-45)" text-anchor="end" font-family="Liberation Sans" font-size="10.7" fill="#222" stroke="#222" stroke-width="0.25">06:45</text>
<text transform="translate(338.5,503.8) rotate(-45)" text-anchor="end" font-family="Liberation Sans" font-size="10.7" fill="#222" stroke="#222" stroke-width="0.25">07:30</text>
<text transform="translate(357.8,503.8) rotate(-45)" text-anchor="end" font-family="Liberation Sans" font-size="10.7" fill="#222" stroke="#222" stroke-width="0.25">08:15</text>
<text transform="translate(377.0,503.8) rotate(-45)" text-anchor="end" font-family="Liberation Sans" font-size="10.7" fill="#222" stroke="#222" stroke-width="0.25">09:00</text>
<text transform="translate(396.2,503.8) rotate(-45)" text-anchor="end" font-family="Liberation Sans" font-size="10.7" fill="#222" stroke="#222" stroke-width="0.25">09:45</text>
<text transform="translate(415.5,503.8) rotate(-45)" text-anchor="end" font-family="Liberation Sans" font-size="10.7" fill="#222" stroke="#222" stroke-width="0.25">10:30</text>
<text transform="translate(434.8,503.8) rotate(-45)" text-anchor="end" font-family="Liberation Sans" font-size="10.7" fill="#222" stroke="#222" stroke-width="0.25">11:15</text>
<text transform="translate(454.0,503.8) rotate(-45)" text-anchor="end" font-family="Liberation Sans" font-size="10.7" fill="#222" stroke="#222" stroke-width="0.25">12:00</text>
<text transform="translate(473.2,503.8) rotate(-45)" text-anchor="end" font-family="Liberation Sans" font-size="10.7" fill="#222" stroke="#222" stroke-width="0.25">12:45</text>
<text transform="translate(492.5,503.8) rotate(-45)" text-anchor="end" font-family="Liberation Sans" font-size="10.7" fill="#222" stroke="#222" stroke-width="0.25">13:30</text>
<text transform="translate(511.8,503.8) rotate(-45)" text-anchor="end" font-family="Liberation Sans" font-size="10.7" fill="#222" stroke="#222" stroke-width="0.25">14:15</text>
<rect x="162.6" y="562.2" width="10" height="3.6" fill="#f0bd2e"/>
<path d="M168.40,565.70 A5.5 5.5 0 1 1 176.20,565.70 Z" fill="#f0bd2e"/>
<text x="183.5" y="565.8000000000001" font-family="Liberation Sans" font-size="10.3" fill="#444" letter-spacing="0.18">Actual solar power</text>
<rect x="162.6" y="578.2" width="10" height="3.6" fill="#a5d3f7"/>
<path d="M168.40,581.70 A5.5 5.5 0 1 1 176.20,581.70 Z" fill="#a5d3f7"/>
<text x="183.5" y="581.8000000000001" font-family="Liberation Sans" font-size="10.3" fill="#444" letter-spacing="0.18">Plant power</text>
<rect x="162.6" y="594.2" width="10" height="3.6" fill="#a9b3bc"/>
<path d="M168.40,597.70 A5.5 5.5 0 1 1 176.20,597.70 Z" fill="#a9b3bc"/>
<text x="183.5" y="597.8000000000001" font-family="Liberation Sans" font-size="10.3" fill="#444" letter-spacing="0.18">Plant power direct grid</text>
<rect x="316.3" y="562.2" width="10" height="3.6" fill="#2f81d1"/>
<path d="M322.10,565.70 A5.5 5.5 0 1 1 329.90,565.70 Z" fill="#2f81d1"/>
<text x="337.2" y="565.8000000000001" font-family="Liberation Sans" font-size="10.3" fill="#444" letter-spacing="0.18">Grid power</text>
<rect x="316.3" y="578.2" width="10" height="3.6" fill="#f0a02e"/>
<path d="M322.10,581.70 A5.5 5.5 0 1 1 329.90,581.70 Z" fill="#f0a02e"/>
<text x="337.2" y="581.8000000000001" font-family="Liberation Sans" font-size="10.3" fill="#444" letter-spacing="0.18">Plant power direct sun</text>
</svg>
<!--/CHART1-->
<!--CHART2-->
<svg class="a" style="left:0;top:0" width="1010" height="645" viewBox="0 0 1010 645">
<path d="M617 266.5 L980.5 266.5" stroke="#e4e4e4" stroke-width="1"/>
<path d="M617 332.3 L980.5 332.3" stroke="#e4e4e4" stroke-width="1"/>
<path d="M617 397.2 L980.5 397.2" stroke="#e4e4e4" stroke-width="1"/>
<path d="M617 461.8 L980.5 461.8" stroke="#e4e4e4" stroke-width="1"/>
<rect x="620.5" y="427.3" width="2.8" height="99.7" rx="1" fill="#bd7ff0"/>
<rect x="625.5" y="452.3" width="2.8" height="74.7" rx="1" fill="#86b9e6"/>
<rect x="635.6" y="426.3" width="2.8" height="100.7" rx="1" fill="#bd7ff0"/>
<rect x="640.6" y="426.3" width="2.8" height="100.7" rx="1" fill="#86b9e6"/>
<rect x="650.8" y="425.3" width="2.8" height="101.7" rx="1" fill="#bd7ff0"/>
<rect x="655.8" y="425.3" width="2.8" height="101.7" rx="1" fill="#86b9e6"/>
<rect x="665.9" y="424.3" width="2.8" height="102.7" rx="1" fill="#bd7ff0"/>
<rect x="670.9" y="449.7" width="2.8" height="77.3" rx="1" fill="#86b9e6"/>
<rect x="681.1" y="424.3" width="2.8" height="102.7" rx="1" fill="#bd7ff0"/>
<rect x="686.1" y="454.7" width="2.8" height="72.3" rx="1" fill="#86b9e6"/>
<rect x="696.2" y="417.6" width="2.8" height="109.4" rx="1" fill="#bd7ff0"/>
<rect x="701.2" y="438.5" width="2.8" height="88.5" rx="1" fill="#86b9e6"/>
<rect x="711.3" y="392.5" width="2.8" height="134.5" rx="1" fill="#bd7ff0"/>
<rect x="716.3" y="402.4" width="2.8" height="124.6" rx="1" fill="#86b9e6"/>
<rect x="726.5" y="359.2" width="2.8" height="167.8" rx="1" fill="#bd7ff0"/>
<rect x="731.5" y="362.2" width="2.8" height="164.8" rx="1" fill="#86b9e6"/>
<rect x="741.6" y="375.2" width="2.8" height="151.8" rx="1" fill="#bd7ff0"/>
<rect x="746.6" y="375.2" width="2.8" height="151.8" rx="1" fill="#86b9e6"/>
<rect x="756.8" y="401.4" width="2.8" height="125.6" rx="1" fill="#bd7ff0"/>
<rect x="761.8" y="401.4" width="2.8" height="125.6" rx="1" fill="#86b9e6"/>
<rect x="771.9" y="424.3" width="2.8" height="102.7" rx="1" fill="#bd7ff0"/>
<rect x="776.9" y="448.7" width="2.8" height="78.3" rx="1" fill="#86b9e6"/>
<rect x="787.0" y="433.3" width="2.8" height="93.7" rx="1" fill="#bd7ff0"/>
<rect x="792.0" y="474.5" width="2.8" height="52.5" rx="1" fill="#86b9e6"/>
<rect x="802.2" y="439.4" width="2.8" height="87.6" rx="1" fill="#bd7ff0"/>
<rect x="807.2" y="460.6" width="2.8" height="66.4" rx="1" fill="#86b9e6"/>
<rect x="817.3" y="435.4" width="2.8" height="91.6" rx="1" fill="#bd7ff0"/>
<rect x="822.3" y="455.2" width="2.8" height="71.8" rx="1" fill="#86b9e6"/>
<rect x="832.5" y="444.4" width="2.8" height="82.6" rx="1" fill="#bd7ff0"/>
<rect x="837.5" y="476.4" width="2.8" height="50.6" rx="1" fill="#86b9e6"/>
<rect x="847.6" y="450.3" width="2.8" height="76.7" rx="1" fill="#bd7ff0"/>
<rect x="852.6" y="482.4" width="2.8" height="44.6" rx="1" fill="#86b9e6"/>
<rect x="862.7" y="434.3" width="2.8" height="92.7" rx="1" fill="#bd7ff0"/>
<rect x="867.7" y="476.4" width="2.8" height="50.6" rx="1" fill="#86b9e6"/>
<rect x="877.9" y="423.4" width="2.8" height="103.6" rx="1" fill="#bd7ff0"/>
<rect x="882.9" y="450.3" width="2.8" height="76.7" rx="1" fill="#86b9e6"/>
<rect x="893.0" y="392.3" width="2.8" height="134.7" rx="1" fill="#bd7ff0"/>
<rect x="898.0" y="407.1" width="2.8" height="119.9" rx="1" fill="#86b9e6"/>
<rect x="908.2" y="351.3" width="2.8" height="175.7" rx="1" fill="#bd7ff0"/>
<rect x="913.2" y="393.3" width="2.8" height="133.7" rx="1" fill="#86b9e6"/>
<rect x="923.3" y="326.3" width="2.8" height="200.7" rx="1" fill="#bd7ff0"/>
<rect x="928.3" y="368.1" width="2.8" height="158.9" rx="1" fill="#86b9e6"/>
<rect x="938.4" y="362.2" width="2.8" height="164.8" rx="1" fill="#bd7ff0"/>
<rect x="943.4" y="382.4" width="2.8" height="144.6" rx="1" fill="#86b9e6"/>
<rect x="953.6" y="390.3" width="2.8" height="136.7" rx="1" fill="#bd7ff0"/>
<rect x="958.6" y="396.2" width="2.8" height="130.8" rx="1" fill="#86b9e6"/>
<rect x="968.7" y="401.2" width="2.8" height="125.8" rx="1" fill="#bd7ff0"/>
<rect x="973.7" y="403.2" width="2.8" height="123.8" rx="1" fill="#86b9e6"/>
<path d="M617 527 L980.5 527" stroke="#444" stroke-width="1.5"/>
<text x="575.8" y="264.3" text-anchor="end" font-family="Liberation Sans" font-size="10.8" fill="#444">0,2</text>
<text x="603.6" y="264.6" text-anchor="end" font-family="Liberation Sans" font-size="7.3" fill="#555">€ / kWh</text>
<text x="575.8" y="328.5" text-anchor="end" font-family="Liberation Sans" font-size="10.8" fill="#444">0,15</text>
<text x="603.6" y="328.8" text-anchor="end" font-family="Liberation Sans" font-size="7.3" fill="#555">€ / kWh</text>
<text x="575.8" y="394" text-anchor="end" font-family="Liberation Sans" font-size="10.8" fill="#444">0,1</text>
<text x="603.6" y="394.3" text-anchor="end" font-family="Liberation Sans" font-size="7.3" fill="#555">€ / kWh</text>
<text x="575.8" y="458.5" text-anchor="end" font-family="Liberation Sans" font-size="10.8" fill="#444">0,05</text>
<text x="603.6" y="458.8" text-anchor="end" font-family="Liberation Sans" font-size="7.3" fill="#555">€ / kWh</text>
<text x="575.8" y="523.5" text-anchor="end" font-family="Liberation Sans" font-size="10.8" fill="#444">0</text>
<text x="603.6" y="523.8" text-anchor="end" font-family="Liberation Sans" font-size="7.3" fill="#555">€ / kWh</text>
<text transform="translate(626.0,541.5) rotate(-45)" text-anchor="end" font-family="Liberation Sans" font-size="10.7" fill="#222" stroke="#222" stroke-width="0.25">00:00</text>
<text transform="translate(656.3,541.5) rotate(-45)" text-anchor="end" font-family="Liberation Sans" font-size="10.7" fill="#222" stroke="#222" stroke-width="0.25">02:00</text>
<text transform="translate(686.6,541.5) rotate(-45)" text-anchor="end" font-family="Liberation Sans" font-size="10.7" fill="#222" stroke="#222" stroke-width="0.25">04:00</text>
<text transform="translate(716.8,541.5) rotate(-45)" text-anchor="end" font-family="Liberation Sans" font-size="10.7" fill="#222" stroke="#222" stroke-width="0.25">06:00</text>
<text transform="translate(747.1,541.5) rotate(-45)" text-anchor="end" font-family="Liberation Sans" font-size="10.7" fill="#222" stroke="#222" stroke-width="0.25">08:00</text>
<text transform="translate(777.4,541.5) rotate(-45)" text-anchor="end" font-family="Liberation Sans" font-size="10.7" fill="#222" stroke="#222" stroke-width="0.25">10:00</text>
<text transform="translate(807.7,541.5) rotate(-45)" text-anchor="end" font-family="Liberation Sans" font-size="10.7" fill="#222" stroke="#222" stroke-width="0.25">12:00</text>
<text transform="translate(838.0,541.5) rotate(-45)" text-anchor="end" font-family="Liberation Sans" font-size="10.7" fill="#222" stroke="#222" stroke-width="0.25">14:00</text>
<text transform="translate(868.2,541.5) rotate(-45)" text-anchor="end" font-family="Liberation Sans" font-size="10.7" fill="#222" stroke="#222" stroke-width="0.25">16:00</text>
<text transform="translate(898.5,541.5) rotate(-45)" text-anchor="end" font-family="Liberation Sans" font-size="10.7" fill="#222" stroke="#222" stroke-width="0.25">18:00</text>
<text transform="translate(928.8,541.5) rotate(-45)" text-anchor="end" font-family="Liberation Sans" font-size="10.7" fill="#222" stroke="#222" stroke-width="0.25">20:00</text>
<text transform="translate(959.1,541.5) rotate(-45)" text-anchor="end" font-family="Liberation Sans" font-size="10.7" fill="#222" stroke="#222" stroke-width="0.25">22:00</text>
<path d="M605.4 599.2 L610 590.8 L614.5 599.2 Z" fill="#a44ee0"/>
<path d="M614.4 591 L623.7 591 L619 600.3 Z" fill="#f03a3a"/>
<text x="626.8" y="598.6" font-family="Liberation Sans" font-size="10" fill="#444">Netherlands (10YNL----------L)</text>
<path d="M785.1 599.2 L789.8 590.8 L794.5 599.2 Z" fill="#5d9ee0"/>
<path d="M794.5 591 L804.4 591 L799.5 600.3 Z" fill="#f58a1f"/>
<text x="806.9" y="598.6" font-family="Liberation Sans" font-size="10.2" fill="#444">Belgium (10YBE----------2)</text>
</svg>
<!--/CHART2-->
</body></html>
